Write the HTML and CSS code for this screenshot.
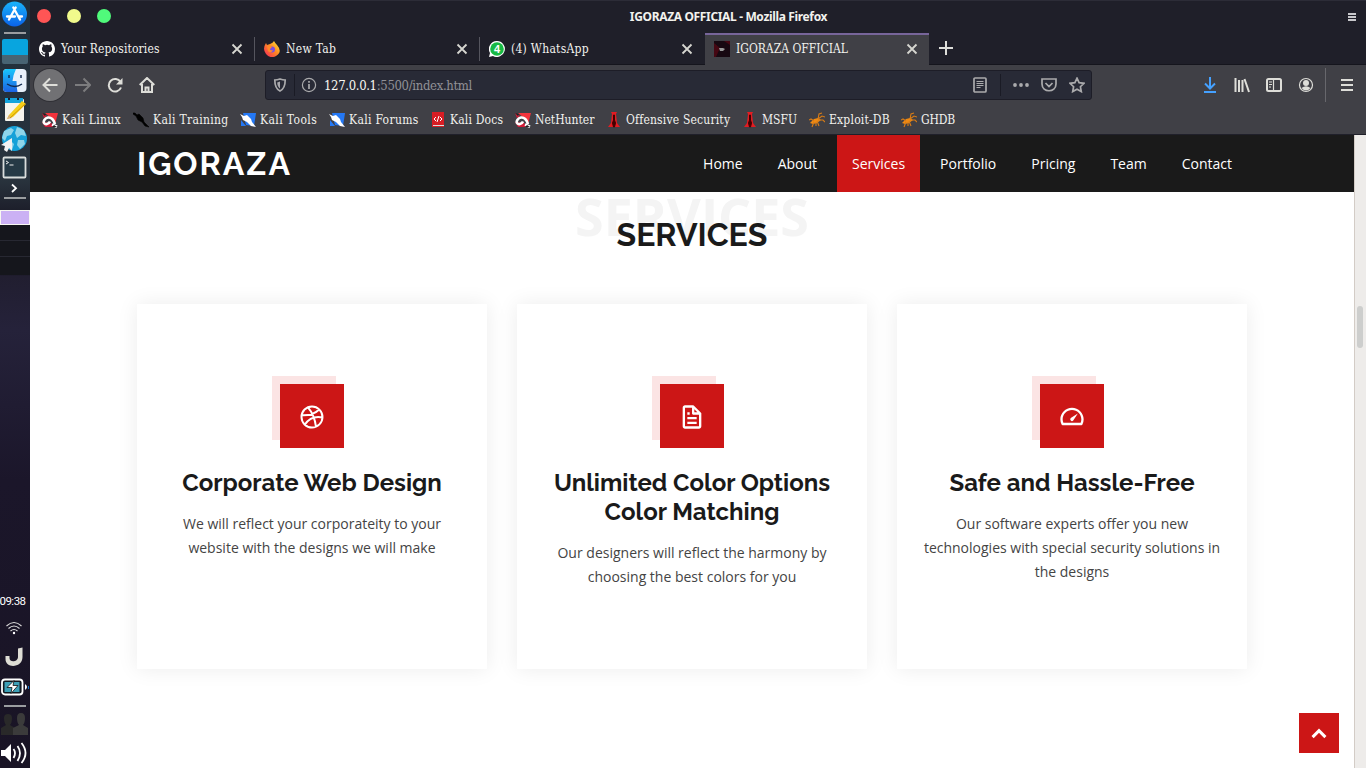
FILE: index.html
```html
<!DOCTYPE html>
<html lang="en">
<head>
<meta charset="utf-8">
<title>IGORAZA OFFICIAL</title>
<link rel="stylesheet" href="styles.css">
</head>
<body>
<svg class="defs" width="0" height="0">
  <defs>
    <symbol id="close" viewBox="0 0 16 16"><path d="M3.500 3.500l9 9m0-9l-9 9" stroke="#d6d6d0" stroke-width="1.800" fill="none"/></symbol>
    <symbol id="kali" viewBox="0 0 16 16"><path d="M3 1h13l-3 11-4-6z" fill="#f3333c"/><path d="M0 1l5 3-3 2zM0 10l3 5 10 0-4-4z" fill="#d01c38"/><path d="M13 12C12 8 9 5 6 5.500C3 6 1 9 2 11C3 13 7 12 8 9.500M10 12.500l5 2.300" fill="none" stroke="#fff" stroke-width="2.600"/><path d="M0 1l4 1-1 2zM12 13l3 2h-5z" fill="#222"/></symbol>
    <symbol id="dragon" viewBox="0 0 16 16"><path d="M0 1l2 0 2 2 2-1 4 4 1 4 5 5-4-1-3-4-4-2-2-4-3-2z" stroke="#000" stroke-width=".6"/></symbol>
    <symbol id="blue" viewBox="0 0 16 16"><path d="M3 1h13l-2 13-8-1z" fill="#2478f5"/><path d="M0 2l4 2 3-1 4 4 1 3 4 5-5-1-4-4-4-2-1-3z" fill="#fff"/><path d="M1 8l5 6H1z" fill="#2478f5"/></symbol>
    <symbol id="offsec" viewBox="0 0 16 16"><path d="M5 0h6l-1 2 1 9 3 4H2l3-4 1-9z" fill="#e21c22"/><path d="M7.500 3h1v5l1 3-1 4h-1l-1-4 1-3z" stroke="#400" fill="#400"/></symbol>
    <symbol id="ant" viewBox="0 0 16 16"><path d="M1 11l4-4 4-1 3 2-4 3-4 1z" fill="#ef8a13"/><path d="M9 7l1-5 3-1M9 7l4-3 3 1M9 8l5 0 2 2M8 9l2 5M5 9L2 7 0 8M5 10l-2 5M7 10v4" fill="none" stroke="#d87c16" stroke-width="1.100"/></symbol>
  </defs>
</svg>
<div class="desktop">
  <aside class="dock">
    <svg class="d30" viewBox="0 0 30 30"><defs><linearGradient id="g1" x2="0" y2="1"><stop stop-color="#19b5fb"/><stop offset="1" stop-color="#0a62e8"/></linearGradient></defs><circle cx="14.500" cy="14" r="12.500" fill="url(#g1)"/><path d="M15.700 7.500L9 19.500M13.300 7.500l6.700 12M7 16.500h8M18.500 16.500H22" stroke="#fff" stroke-width="2.300" stroke-linecap="round"/></svg>
    <div class="rule"></div>
    <div class="pager"></div>
    <svg class="d29" viewBox="0 0 30 29"><defs><linearGradient id="g2" x2="0" y2="1"><stop stop-color="#19c6fb"/><stop offset="1" stop-color="#1b62e3"/></linearGradient></defs><rect x="3" y="3" width="23.500" height="23" rx="4" fill="#e7f0fa"/><path d="M7 3h9q-3 6-3.500 12h4q0 6 1 11H7q-4 0-4-4V7q0-4 4-4z" fill="url(#g2)"/><path d="M9 9v3M21 9v3M7 18q8 5 15 0" stroke="#102a50" stroke-width="1.400" fill="none"/></svg>
    <svg class="d29" viewBox="0 0 30 29"><rect x="5" y="4" width="19" height="22" rx="1" fill="#f4f4ee"/><path d="M5 3h18v5H5z" fill="#13a4dc"/><path d="M8 4h2M17 4h2" stroke="#123" stroke-width="2"/><path d="M7 24l2-4L22 6l4 3-13 13z" fill="#f5cf18"/><path d="M7 24l2-4 3 3z" fill="#d8b080"/><path d="M10 23L25 9" stroke="#d29800"/></svg>
    <svg class="d29" viewBox="0 0 30 29"><circle cx="14.500" cy="14.500" r="12.500" fill="#16a1d8"/><path d="M4 7l7-3 3 2-3 5-4 1-2 5-3-3zM17 3l7 3 2 6-5-1-4 3-2-5zM18 16l6 0 1 4-5 5-3-4zM11 17l3 3-2 6-4-4z" fill="#8fd5ea"/><path d="M12 14v13l-3-3-2 4-3-2 1-4-4-1z" fill="#f2f2f2"/></svg>
    <svg class="d29" viewBox="0 0 30 29"><rect x="3.500" y="4.500" width="22" height="20" rx="1" fill="#263a46" stroke="#d9dddc" stroke-width="1.800"/><path d="M6 8l2.500 1.500L6 11M9.500 12h4" fill="none" stroke="#eee"/></svg>
    <svg class="d13" viewBox="0 0 30 13"><path d="M12 2.500l4 3.700-4 3.800" fill="none" stroke="#fff" stroke-width="1.800"/></svg>
    <div class="rule rule-b"></div>
    <div class="work on"></div><div class="work"></div><div class="work"></div><div class="work last"></div>
    <div class="grow"></div>
    <div class="clock">09:38</div>
    <svg class="d28" viewBox="0 0 30 28"><path d="M6.500 12q7.500-7 15 0M8.500 14.500q5.500-5 11 0M10.500 17q3.500-3 7 0" fill="none" stroke="#ddd" stroke-width="1.100"/><circle cx="14" cy="19" r="1.200" fill="#fff"/></svg>
    <svg class="d30" viewBox="0 0 30 30"><path d="M18 6.500l4.500-1V15c0 11-17 12-17 2v-3h4v2c0 5 8.500 4 8.500-1z" fill="#deddd5"/></svg>
    <svg class="d30" viewBox="0 0 30 30"><rect x="2" y="7.500" width="20.500" height="15" rx="3" fill="#111820" stroke="#fff" stroke-width="1.800"/><path d="M4.500 10h15v10h-15z" fill="#3d9fb6"/><path d="M14 8.500l-7 7h5l-1 6 7-8h-5z" fill="#fff" stroke="#111" stroke-width=".8"/><path d="M25 12q4 3 0 6z" fill="#fff"/><path d="M28 14h1v3h-1z" fill="#1678cf"/></svg>
    <div class="rule rule-c"></div>
    <svg class="d32" viewBox="0 0 30 32"><g fill="#292929"><path d="M4 11q0-4 4-4t4 4q0 5-2 7l5 3v7H1v-7l5-3q-2-2-2-7z"/></g><g fill="#3b3b3b"><path d="M17 11q0-5 4-5t4 5q0 5-2 7l5 3v7H13v-7l6-3q-2-2-2-7z"/></g></svg>
    <svg class="d29" viewBox="0 0 30 29"><path d="M1 11h4l6-6v18l-6-6H1z" fill="#fff"/><path d="M13.500 10q3 4 0 9M17.500 7q5 7 0 15M21.500 4q8 10 0 20" fill="none" stroke="#fff" stroke-width="1.800"/></svg>
  </aside>
  <main class="window">
    <div class="titlebar"><i class="dot red"></i><i class="dot yellow"></i><i class="dot green"></i><b class="wtitle">IGORAZA OFFICIAL - Mozilla Firefox</b><svg class="wmenu" viewBox="0 0 8 8"><path d="M0 1h8M0 4h8M0 7h8" stroke="#c8c8cc" stroke-width="1.800"/></svg></div>
    <div class="tabs">
      <div class="tab"><svg class="ico" viewBox="0 0 16 16"><path fill="#fff" d="M8 0C3.580 0 0 3.580 0 8c0 3.540 2.290 6.530 5.470 7.590.4.070.55-.17.55-.38v-1.490c-2.010.37-2.530-.49-2.690-.94-.09-.23-.48-.94-.82-1.130-.28-.15-.68-.52-.01-.53.63-.01 1.080.58 1.230.82.72 1.210 1.870.87 2.330.66.07-.52.28-.87.510-1.070-1.780-.2-3.640-.89-3.640-3.950 0-.87.310-1.590.82-2.150-.08-.2-.36-1.020.08-2.120 0 0 .67-.21 2.200.82a7.600 7.600 0 0 1 4 0c1.530-1.040 2.200-.82 2.200-.82.44 1.100.16 1.920.08 2.120.51.56.82 1.270.82 2.150 0 3.070-1.870 3.750-3.650 3.950.29.25.54.73.54 1.480v2.200c0 .21.15.46.55.38A8 8 0 0 0 16 8c0-4.420-3.580-8-8-8z"/></svg><span class="t1">Your Repositories</span><svg class="ico"><use href="#close"/></svg></div>
      <div class="tab"><svg class="ico" viewBox="0 0 16 16"><defs><linearGradient id="ff" x1="1" x2="0" y2="1"><stop stop-color="#fff13a"/><stop offset=".45" stop-color="#ff8b22"/><stop offset="1" stop-color="#f3205e"/></linearGradient></defs><path d="M10 0q1 2 3 4 6 7-1 11-6 3-10-2-4-5 0-11l1 2 3-1q3-1 4-3z" fill="url(#ff)"/><circle cx="8" cy="8.500" r="3" fill="#7950df"/><path d="M3 5q3-1 5 1L6 8q0 2 3 1-2 4-5 1z" fill="#ff8928"/></svg><span class="t2">New Tab</span><svg class="ico"><use href="#close"/></svg></div>
      <div class="tab nosep"><svg class="ico" viewBox="0 0 16 16"><path d="M8 0a8 8 0 1 1-4 15l-4 1 1-4A8 8 0 0 1 8 0z" fill="#fff"/><circle cx="8" cy="8" r="6.800" fill="#17b944"/><text x="8" y="12" class="badge">4</text></svg><span class="t3">(4) WhatsApp</span><svg class="ico"><use href="#close"/></svg></div>
      <div class="tab active"><svg class="ico" viewBox="0 0 16 16"><path d="M0 0h16v16H0z" fill="#170811"/><path d="M0 2l6 5-4 9H0zM10 0h6v4z" fill="#450713"/><path d="M5 7h4l2 1-2 2H6z" fill="#999"/></svg><span class="t4">IGORAZA OFFICIAL</span><svg class="ico"><use href="#close"/></svg></div>
      <svg class="plus" viewBox="0 0 16 16"><path d="M8 1v14M1 8h14" stroke="#dededa" stroke-width="2"/></svg>
    </div>
    <div class="toolbar">
      <div class="back"><svg class="ico" viewBox="0 0 16 16"><path d="M15.500 8H1.500M8 1.500L1.500 8 8 14.500" class="s2"/></svg></div>
      <svg class="ico fwd" viewBox="0 0 16 16"><path d="M0 8h14.500M8.500 1.500L15 8l-6.500 6.500" class="s2"/></svg>
      <svg class="ico rel" viewBox="0 0 16 16"><path d="M13.500 5A6.300 6.300 0 1 0 14 10.500" class="s2"/><path d="M15.500 1v6.500H9z" fill="#deded9"/></svg>
      <svg class="ico hom" viewBox="0 0 16 16"><path d="M.7 8L8 1l7.300 7M3 7v8h10V7M6.500 15v-4.500h3V15" class="s2"/></svg>
      <div class="url">
        <svg class="ico" viewBox="0 0 16 16"><path d="M8 2q3 1 5.200 1c0 5.500-1 9-5.200 11C3.800 12 2.800 8.500 2.800 3Q5 3 8 2z" class="g2"/><path d="M8 4.500v7Q5.500 10 5.200 5.500z" fill="#a9a9ad"/></svg>
        <i class="vsep"></i>
        <svg class="ico info" viewBox="0 0 16 16"><circle cx="8" cy="8" r="6.600" class="g1"/><path d="M8 7v5M8 4v1.700" class="g2"/></svg>
        <span class="addr"><em>127.0.0.1</em>:5500/index.html</span>
        <svg class="ico" viewBox="0 0 16 16"><rect x="2" y="1" width="12" height="14" rx="1" class="g2"/><path d="M4.500 4.500h7M4.500 6.500h7M4.500 8.500h7M4.500 10.500h4" class="g1"/></svg>
        <i class="vsep r"></i>
        <svg class="ico" viewBox="0 0 16 16"><g fill="#aaaaac"><circle cx="2" cy="8" r="1.900"/><circle cx="8" cy="8" r="1.900"/><circle cx="14" cy="8" r="1.900"/></g></svg>
        <svg class="ico" viewBox="0 0 16 16"><path d="M1 2h14v5c0 9-14 9-14 0zM4.500 6L8 9.500 11.500 6" class="g2"/></svg>
        <svg class="ico" viewBox="0 0 16 16"><path d="M8 1.200l2.100 4.500 4.900.6-3.600 3.400.9 4.900L8 12.200l-4.300 2.400.9-4.900L1 6.300l4.900-.6z" class="g2"/></svg>
      </div>
      <div class="tools">
        <svg class="ico" viewBox="0 0 16 16"><path d="M8 0v12M3 6.500l5 5 5-5M2 15h12" fill="none" stroke="#45a1ff" stroke-width="2"/></svg>
        <svg class="ico" viewBox="0 0 16 16"><path d="M1.500 1v14M5 3v12M8.500 3v12M10.500 2l4.500 13" class="s2"/></svg>
        <svg class="ico" viewBox="0 0 16 16"><rect x="1" y="2" width="14" height="12" rx="1.500" class="s2"/><path d="M7.500 2v12M3 5h3M3 7.500h3M3 10h2" class="s2 thin"/></svg>
        <svg class="ico" viewBox="0 0 16 16"><circle cx="8" cy="8" r="6.500" class="s2 thin"/><circle cx="8" cy="6" r="3" fill="#deded9"/><path d="M3.500 11q4.500-3.500 9 0-4.500 5-9 0z" fill="#deded9"/></svg>
        <i class="tsep"></i>
        <svg class="ico" viewBox="0 0 16 16"><path d="M2 3h12M2 8h12M2 13h12" class="s2"/></svg>
      </div>
    </div>
    <div class="bookmarks">
      <div class="bm b1"><svg class="ico"><use href="#kali"/></svg><span>Kali Linux</span></div>
      <div class="bm b2"><svg class="ico"><use href="#dragon"/></svg><span>Kali Training</span></div>
      <div class="bm b3"><svg class="ico"><use href="#blue"/></svg><span>Kali Tools</span></div>
      <div class="bm b4"><svg class="ico"><use href="#blue"/></svg><span>Kali Forums</span></div>
      <div class="bm b5"><svg class="ico" viewBox="0 0 16 16"><path d="M2 0h12v15H2z" fill="#d71d24"/><path d="M3 13.500h11" stroke="#ddd"/><path d="M6 5L4 7l2 2M10 5l2 2-2 2M9 4L7 10" fill="none" stroke="#fff"/></svg><span>Kali Docs</span></div>
      <div class="bm b6"><svg class="ico"><use href="#kali"/></svg><span>NetHunter</span></div>
      <div class="bm b7"><svg class="ico"><use href="#offsec"/></svg><span>Offensive Security</span></div>
      <div class="bm b8"><svg class="ico"><use href="#offsec"/></svg><span>MSFU</span></div>
      <div class="bm b9"><svg class="ico"><use href="#ant"/></svg><span>Exploit-DB</span></div>
      <div class="bm b10"><svg class="ico"><use href="#ant"/></svg><span>GHDB</span></div>
    </div>
    <div class="viewport">
      <div class="page">
        <header class="header"><div class="brand">IGORAZA</div>
          <nav class="nav"><a>Home</a><a>About</a><a class="current">Services</a><a>Portfolio</a><a>Pricing</a><a>Team</a><a>Contact</a></nav></header>
        <div class="heading"><span class="ghost">SERVICES</span><h2>SERVICES</h2></div>
        <div class="cards">
          <article class="card"><div class="icon"><svg viewBox="0 0 24 24"><path d="M12 3a9 9 0 1 0 0 18 9 9 0 0 0 0-18zM8.500 3.800Q14 10 15.400 20.200M3.200 10.500Q12.500 11 18.200 5.500M6 18.500Q11 10.500 21 12.400" fill="none" stroke="#fff" stroke-width="1.700"/></svg></div><h4 class="h1">Corporate Web Design</h4><p>We will reflect your corporateity to your website with the designs we will make</p></article>
          <article class="card"><div class="icon"><svg viewBox="0 0 24 24" fill="#fff"><path d="M19.903 8.586a.997.997 0 0 0-.196-.293l-6-6a.997.997 0 0 0-.293-.196A.991.991 0 0 0 13 2H6c-1.103 0-2 .897-2 2v16c0 1.103.897 2 2 2h12c1.103 0 2-.897 2-2V9a1 1 0 0 0-.097-.414zM16.586 8H14V5.414L16.586 8zM6 20V4h6v5a1 1 0 0 0 1 1h5l.002 10H6z"/><path d="M8 12h8v2H8zm0 4h8v2H8zm0-8h2v2H8z"/></svg></div><h4 class="h2">Unlimited Color Options<br>Color Matching</h4><p>Our designers will reflect the harmony by choosing the best colors for you</p></article>
          <article class="card"><div class="icon"><svg viewBox="0 0 24 24" fill="#fff"><path d="M12 4C6.486 4 2 8.486 2 14a9.890 9.890 0 0 0 1.051 4.445c.17.34.516.555.895.555h16.107c.379 0 .726-.215.896-.555A9.890 9.890 0 0 0 22 14c0-5.514-4.486-10-10-10zm7.410 13H4.590A7.875 7.875 0 0 1 4 14c0-4.411 3.589-8 8-8s8 3.589 8 8a7.875 7.875 0 0 1-.59 3z"/><path d="M10.939 12.939a1.530 1.530 0 0 0 0 2.121 1.440 1.440 0 0 0 2.121 0l3.962-6.038-6.083 3.917z"/></svg></div><h4 class="h3">Safe and Hassle-Free</h4><p>Our software experts offer you new technologies with special security solutions in the designs</p></article>
        </div>
        <div class="totop"><svg viewBox="0 0 24 24"><path d="M6.500 15.500l5.500-5.500 5.500 5.500" fill="none" stroke="#fff" stroke-width="2.600"/></svg></div>
      </div>
      <div class="scroll"><div class="thumb"></div></div>
    </div>
  </main>
</div>
</body>
</html>
```
FILE: styles.css
```css
*{box-sizing:border-box}
body{margin:0;overflow:hidden;background:#fff}
svg{display:block;flex:none}
.defs{position:absolute}
.desktop{display:flex;width:1366px;height:768px}
.dock{width:30px;height:768px;flex:none;display:flex;flex-direction:column;overflow:hidden;background:linear-gradient(#202f3b 0,#29333d 180px,#171522 225px,#171522 274px,#211e30 276px,#25223a 330px,#1b162a 480px,#191425 768px)}
.dock svg{width:30px}
.d13{height:13px}.d28{height:28px}.d29{height:29px}.d30{height:30px}.d32{height:32px}
.rule{height:2px;margin:2px 4px 5px;background:#9a9da0;flex:none}
.pager{height:25px;width:26px;margin:0 0 2px 2px;background:linear-gradient(#08a5df 16px,#486473 16px);border-radius:2px;flex:none}
.rule-b{margin:2px 4px 11px}
.work{height:16px;background:#15161c;border-bottom:1px solid #272832;flex:none}
.work.on{height:15px;background:#cbb1f4;border:1px solid #f8f8f2}
.work.last{height:18px;border:0}
.grow{flex:1}
.clock{font:11.5px/18px Roboto,sans-serif;color:#fff;height:18px;margin-bottom:4px;letter-spacing:-.5px;text-align:center;width:27px;margin-left:-1px;white-space:nowrap}
.rule-c{margin:3px 4px 0}
.window{flex:1;min-width:0;height:768px;display:flex;flex-direction:column;font:12px "Roboto Slab","DejaVu Serif Condensed","DejaVu Serif",serif;font-stretch:condensed;color:#f2f2ee}
.titlebar{height:33px;background:#1f1f29;border-top:1px solid #2c2c37;display:flex;align-items:center;gap:16px;padding:0 10px 0 7px;flex:none}
.dot{width:14px;height:14px;border-radius:50%;margin-top:-2px}
.red{background:#ff5555}.yellow{background:#f1fa8c}.green{background:#50fa7b}
.wtitle{font:bold 12px "Noto Sans",sans-serif;flex:1;text-align:center;margin:-2px 0 0 -2px;letter-spacing:-.35px}
.wmenu{width:8px;height:8px;margin-top:-1px}
.ico{width:16px;height:16px}
.tabs{height:32px;background:#1f1f29;display:flex;flex:none;border-bottom:1px solid #15151d}
.tab{width:225px;height:32px;display:flex;align-items:center;padding:0 10px 0 9px;gap:6px;background:linear-gradient(#55555e,#55555e) 224px 4px/1px 24px no-repeat}
.tab span{flex:1;white-space:nowrap}
.t1{letter-spacing:.13px}.t2{letter-spacing:.3px}.t3{letter-spacing:.27px}
.tab.nosep{background:none}
.tab.active{width:224px;padding-right:9px;background:#404046;border-top:2px solid #77659a;padding-bottom:2px}
.badge{font:bold 11px "Liberation Sans";fill:#fff;text-anchor:middle}
.plus{width:16px;height:16px;margin:7px 0 0 9px}
.toolbar{height:40px;background:#404046;display:flex;align-items:center;flex:none;padding-left:4px}
.back{width:32px;height:32px;border-radius:50%;background:#717174;display:flex;align-items:center;justify-content:center;box-shadow:0 0 0 1px #303036}
.s2{fill:none;stroke:#deded9;stroke-width:2}
.thin{stroke-width:1.2}
.g2{fill:none;stroke:#aaaaac;stroke-width:1.7}
.g1{fill:none;stroke:#aaaaac;stroke-width:1.2}
.fwd{margin-left:9px;opacity:.38}.rel{margin-left:16px}.hom{margin-left:16px}
.url{width:827px;height:30px;margin-left:110px;background:#282a36;border:1px solid #1d1d27;border-radius:3px;display:flex;align-items:center;padding:0 6px 0 6px;gap:12px}
.vsep{width:1px;height:22px;background:#1a1b25;margin-left:-6px}
.vsep.r{margin:0}
.info{margin-left:-6px}
.addr{flex:1;margin-left:-5px;color:#919197;font-size:13px;letter-spacing:-.34px;white-space:nowrap}
.addr em{font-style:normal;color:#f8f8f2}
.tools{flex:1;display:flex;align-items:center;gap:16px;margin-left:110px}
.tsep{width:1px;height:34px;background:#67676c;margin:0 -3px 0 -5px}
.bookmarks{height:30px;background:#404046;border-bottom:1px solid #20202a;display:flex;padding-left:12px;flex:none}
.bm{display:flex;align-items:center;gap:4px;white-space:nowrap;flex:none}
.b1{width:91px;letter-spacing:.36px}.b2{width:107px;letter-spacing:.32px}.b3{width:89px;letter-spacing:.4px}.b4{width:101px;letter-spacing:.32px}.b5{width:85px;letter-spacing:.18px}.b6{width:91px}.b7{width:136px;letter-spacing:.18px}.b8{width:67px}.b9{width:92px;letter-spacing:.2px}.b10{letter-spacing:-.15px}
.viewport{flex:1;display:flex;background:#fff;min-height:0}
.page{width:1324px;position:relative;font-family:"Open Sans",sans-serif;font-stretch:normal}
.header{height:57px;background:#1a1a1a;display:flex;align-items:center;justify-content:space-between;padding:0 107px}
.brand{font:bold 32px Raleway,Lato,sans-serif;letter-spacing:2px;color:#fff}
.nav{display:flex;height:57px;gap:5px}
.nav a{padding:0 15px;font-size:14px;line-height:57px;color:#fff}
.nav .current{background:#cc1616}
.heading{height:112px;position:relative;text-align:center}
.ghost{position:absolute;left:0;right:0;top:-12px;font-weight:700;font-size:52px;line-height:72px;color:#f4f4f4}
h2{position:relative;margin:0;padding-top:24px;font:bold 32px/38px Raleway,Lato,sans-serif;color:#1a1a1a}
.cards{display:grid;grid-template-columns:repeat(3,350px);gap:30px;padding-left:107px}
.card{height:365px;padding:80px 25px 0;text-align:center;box-shadow:0 0 20px rgba(0,0,0,.08);background:#fff}
.icon{width:64px;height:64px;margin:0 auto;padding-top:1px;background:#cc1616;box-shadow:-8px -8px 0 #fbe4e4;display:flex;align-items:center;justify-content:center}
.icon svg{width:28px;height:28px}
h4{margin:20px -10px 15px;font:bold 24px/29px Raleway,Lato,sans-serif;color:#1a1a1a}
.card p{margin:0;font-size:14px;line-height:24px;color:#444}
.totop{position:absolute;right:15px;bottom:15px;width:40px;height:40px;background:#cc1616;display:flex;align-items:center;justify-content:center}
.totop svg{width:28px;height:28px}
.scroll{width:12px;background:#eeecea;border-left:1px solid #d3ccc6;padding:171px 0 0 2px}
.thumb{width:6px;height:42px;border-radius:3px;background:#cdcecd}
```
